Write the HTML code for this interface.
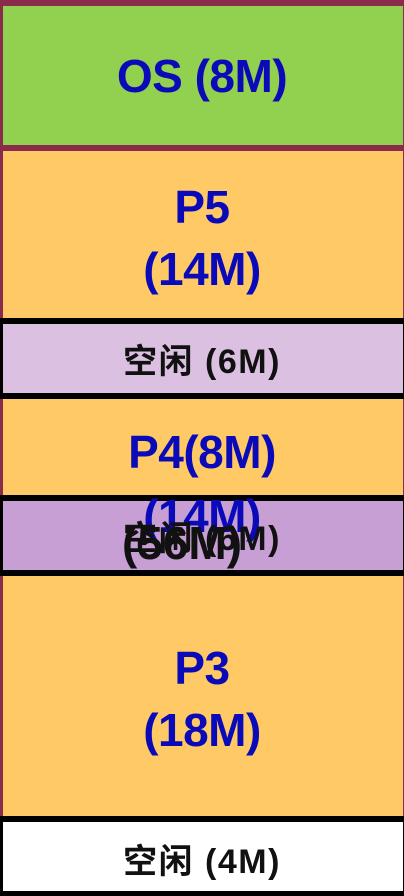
<!DOCTYPE html>
<html><head><meta charset="utf-8"><style>
body{margin:0;width:404px;height:896px;background:#8a2b4b;position:relative;overflow:hidden;font-family:"Liberation Sans","Noto Sans CJK SC",sans-serif;font-weight:bold}
.b{position:absolute;left:3px;right:1px}
.t{position:absolute;left:0;width:404px;text-align:center;white-space:nowrap}
.blue{color:#0a0ab8;font-size:46px;letter-spacing:-0.5px}
.blk{color:#111;font-size:34px;letter-spacing:1.5px}
</style></head><body>
<div class="b" style="top:6px;height:139px;background:#92d050"></div>
<div class="b" style="top:151px;height:167px;background:#ffc966"></div>
<div class="b" style="left:0;right:0;top:318px;height:81px;background:#000"></div>
<div class="b" style="top:324px;height:69px;background:#dcc0e2"></div>
<div class="b" style="top:399px;height:96px;background:#ffc966"></div>
<div class="b" style="left:0;right:0;top:495px;height:81px;background:#000"></div>
<div class="b" style="top:501px;height:69px;background:#c89fd4"></div>
<div class="b" style="top:576px;height:240px;background:#ffc966"></div>
<div class="b" style="left:0;right:0;top:816px;height:80px;background:#000"></div>
<div class="b" style="top:822px;height:69px;background:#fff"></div>

<div class="t blue" style="top:49px">OS (8M)</div>
<div class="t blue" style="top:180px">P5</div>
<div class="t blue" style="top:242px">(14M)</div>
<div class="t blk" style="top:334px">空闲 (6M)</div>
<div class="t blue" style="top:425px">P4(8M)</div>
<div class="t blue" style="top:489px">(14M)</div>
<div class="t blk" style="top:511px">空闲 (6M)</div>
<div class="t" style="top:516px;font-size:46px;color:#111;left:-20px">(56M)</div>
<div class="t blue" style="top:641px">P3</div>
<div class="t blue" style="top:703px">(18M)</div>
<div class="t blk" style="top:834px">空闲 (4M)</div>
</body></html>
